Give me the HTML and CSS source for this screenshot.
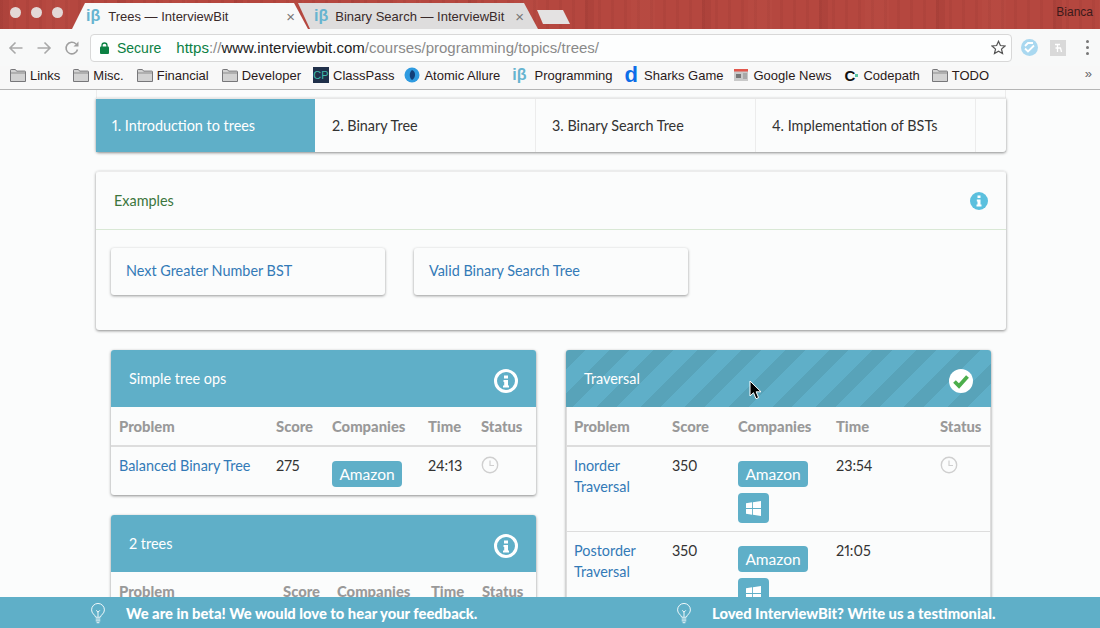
FILE: index.html
```html
<!DOCTYPE html>
<html>
<head>
    <title>Trees — InterviewBit</title>
    <link rel="stylesheet" href="styles.css">
</head>
<body>

    <svg class="icon-defs" width="0" height="0">
        <symbol id="folder" viewBox="0 0 16 13">
            <path d="M.5 12.5V1.2q0-.7.7-.7h4.2l1.2 1.6h8.2q.7 0 .7.7v9.7z" fill="#d2d2d2" stroke="#77777a"/>
            <path d="M1 4h14" stroke="#8d8d8d"/>
        </symbol>
        <symbol id="bulb" viewBox="0 0 16 24">
            <path d="M5.5 15.5C4.5 12.500 1 11.500 1 7.500a7 7 0 0 1 14 0c0 4-3.500 5-4.500 8z" fill="none" stroke="#fff"/>
            <path d="M8 15V9M6 8l2 2 2-2M5.500 17.500h5M5.500 19.500h5M6.500 21.500h3" fill="none" stroke="#fff"/>
        </symbol>
        <symbol id="clock" viewBox="0 0 18 18">
            <circle cx="9" cy="9" r="7.700" fill="none" stroke="#cfcfcf" stroke-width="1.400"/>
            <path d="M9 4.500V9.500H13" fill="none" stroke="#cfcfcf" stroke-width="1.200"/>
        </symbol>
        <symbol id="windows" viewBox="0 0 16 16">
            <path d="M0 2.300 6.500 1.400V7.500H0zM7.400 1.300 16 0V7.500H7.400zM0 8.500H6.500V14.600L0 13.700zM7.400 8.500H16V16L7.400 14.700z" fill="#fff"/>
        </symbol>
        <symbol id="info" viewBox="0 0 24 24">
            <circle cx="12" cy="12" r="10.500" fill="none" stroke="#fff" stroke-width="3"/>
            <path d="M10 6.500h4v3h-4zM9.500 11h4.500v5.500h1v2h-6v-2h1.200V13H9.500z" fill="#fff"/>
        </symbol>
    </svg>

    <header class="browser">
        <div class="tab-strip">
            <div class="lights"><i></i><i></i><i></i></div>
            <div class="tab tab-front"><span class="ib">iβ</span><span class="tab-title">Trees — InterviewBit</span><span class="tab-x">×</span></div>
            <div class="tab tab-back"><span class="ib">iβ</span><span class="tab-title">Binary Search — InterviewBit</span><span class="tab-x">×</span></div>
            <div class="tab-new"></div>
            <div class="user-name">Bianca</div>
        </div>
        <div class="toolbar">
            <div class="nav-buttons">
                <svg width="16" height="16" viewBox="0 0 16 16"><path d="M14.500 8H2M7.500 2.500 2 8l5.500 5.500" fill="none" stroke="#a9a9a9" stroke-width="1.600"/></svg>
                <svg width="16" height="16" viewBox="0 0 16 16"><path d="M1.500 8H14M8.500 2.500 14 8l-5.500 5.500" fill="none" stroke="#a9a9a9" stroke-width="1.600"/></svg>
                <svg width="16" height="16" viewBox="0 0 16 16"><path d="M13.500 9.500A5.800 5.800 0 1 1 12 4" fill="none" stroke="#a0a0a0" stroke-width="1.600"/><path d="M14.500 1.500v5h-5z" fill="#a0a0a0"/></svg>
            </div>
            <div class="omnibox">
                <svg class="lock" width="9" height="12" viewBox="0 0 9 12"><path d="M2 5V3.500a2.500 2.500 0 0 1 5 0V5" fill="none" stroke="#0b8043" stroke-width="1.300"/><rect y="4.500" width="9" height="7.500" rx="1" fill="#0b8043"/></svg>
                <span class="secure">Secure</span>
                <span class="url"><span class="url-green">https</span><span class="url-grey">://</span><span class="url-host">www.interviewbit.com</span><span class="url-grey">/courses/programming/topics/trees/</span></span>
                <svg class="star" width="15" height="15" viewBox="0 0 16 16"><path d="M8 1.400l2 4.500 4.900.5-3.700 3.300 1.100 4.800L8 12l-4.300 2.500 1.100-4.800L1.100 6.400 6 5.900z" fill="none" stroke="#555" stroke-width="1.300"/></svg>
            </div>
            <div class="extensions">
                <svg width="17" height="17" viewBox="0 0 17 17"><circle cx="8.500" cy="8.500" r="8.500" fill="#a9d8f0"/><path d="M4 9.500l3 3 6-6M4 7l3-3h5" fill="none" stroke="#fff" stroke-width="1.800"/></svg>
                <svg width="16" height="16" viewBox="0 0 16 16"><rect width="16" height="16" fill="#d9d9d9"/><path d="M5 4.500h5M7.500 4.500V12M5.500 8h5l1 4" fill="none" stroke="#fff" stroke-width="1.300"/></svg>
                <span class="ext-menu"><i></i><i></i><i></i></span>
            </div>
        </div>
        <nav class="bookmarks">
            <a><svg class="bm-folder"><use href="#folder"/></svg>Links</a>
            <a><svg class="bm-folder"><use href="#folder"/></svg>Misc.</a>
            <a><svg class="bm-folder"><use href="#folder"/></svg>Financial</a>
            <a><svg class="bm-folder"><use href="#folder"/></svg>Developer</a>
            <a class="bm-classpass"><span class="bm-cp">CP</span>ClassPass</a>
            <a class="bm-atomic"><svg width="16" height="16" viewBox="0 0 16 16"><circle cx="8" cy="8" r="7.500" fill="#2f9be0"/><path d="M8 3c4 1 4 8 0 10-3-2-3-8 0-10z" fill="#123f78"/></svg>Atomic Allure</a>
            <a class="bm-programming"><span class="ib">iβ</span>Programming</a>
            <a class="bm-sharks"><span class="bm-d">d</span>Sharks Game</a>
            <a class="bm-news"><svg width="15" height="14" viewBox="0 0 15 14"><rect y="1" width="14" height="12" fill="#c9c9c9"/><rect y="1" width="14" height="2.500" fill="#e2574c"/><rect x="2" y="6" width="5" height="4" fill="#777"/><path d="M9 6h4M9 8h4M9 10h4" stroke="#888"/></svg>Google News</a>
            <a class="bm-codepath"><span class="bm-c">C<i></i></span>Codepath</a>
            <a class="bm-todo"><svg class="bm-folder"><use href="#folder"/></svg>TODO</a>
            <span class="bm-more">»</span>
        </nav>
    </header>

    <main class="page">
        <div class="container">
            <div class="topic-card">
                <div class="topic-tabs">
                    <a class="topic-tab active">1. Introduction to trees</a>
                    <a class="topic-tab">2. Binary Tree</a>
                    <a class="topic-tab">3. Binary Search Tree</a>
                    <a class="topic-tab">4. Implementation of BSTs</a>
                    <a class="topic-tab topic-tab-end"></a>
                </div>
            </div>

            <section class="examples">
                <div class="examples-head">
                    <span>Examples</span>
                    <svg width="18" height="18" viewBox="0 0 18 18"><circle cx="9" cy="9" r="9" fill="#5bc0de"/><path d="M7.500 3.500h3V6h-3zM6.800 7.500h3.700v5h1v2h-5v-2h1v-3h-.7z" fill="#fff"/></svg>
                </div>
                <div class="examples-body">
                    <a class="example-card">Next Greater Number BST</a>
                    <a class="example-card">Valid Binary Search Tree</a>
                </div>
            </section>

            <div class="columns">
                <div class="column">
                    <section class="panel">
                        <div class="panel-head">
                            <span>Simple tree ops</span>
                            <svg class="head-icon"><use href="#info"/></svg>
                        </div>
                        <table class="problems cols-a">
                            <thead>
                                <tr><th>Problem</th><th>Score</th><th>Companies</th><th>Time</th><th>Status</th></tr>
                            </thead>
                            <tbody>
                                <tr>
                                    <td><a>Balanced Binary Tree</a></td>
                                    <td>275</td>
                                    <td><span class="pill">Amazon</span></td>
                                    <td>24:13</td>
                                    <td><svg class="clock"><use href="#clock"/></svg></td>
                                </tr>
                            </tbody>
                        </table>
                    </section>
                    <section class="panel">
                        <div class="panel-head">
                            <span>2 trees</span>
                            <svg class="head-icon"><use href="#info"/></svg>
                        </div>
                        <table class="problems cols-b">
                            <thead>
                                <tr><th>Problem</th><th>Score</th><th>Companies</th><th>Time</th><th>Status</th></tr>
                            </thead>
                        </table>
                    </section>
                </div>
                <div class="column">
                    <section class="panel panel-done">
                        <div class="panel-head panel-head-done">
                            <span>Traversal</span>
                            <svg class="head-icon" viewBox="0 0 24 24"><circle cx="12" cy="12" r="12" fill="#fff"/><path d="M5.500 12.500 10 17l8.500-9.500" fill="none" stroke="#4cae4c" stroke-width="3.800"/></svg>
                        </div>
                        <table class="problems cols-c">
                            <thead>
                                <tr><th>Problem</th><th>Score</th><th>Companies</th><th>Time</th><th>Status</th></tr>
                            </thead>
                            <tbody>
                                <tr>
                                    <td><a>Inorder Traversal</a></td>
                                    <td>350</td>
                                    <td><span class="pill">Amazon</span><span class="pill pill-icon"><svg width="15" height="15"><use href="#windows"/></svg></span></td>
                                    <td>23:54</td>
                                    <td><svg class="clock"><use href="#clock"/></svg></td>
                                </tr>
                                <tr>
                                    <td><a>Postorder Traversal</a></td>
                                    <td>350</td>
                                    <td><span class="pill">Amazon</span><span class="pill pill-icon"><svg width="15" height="15"><use href="#windows"/></svg></span></td>
                                    <td>21:05</td>
                                    <td></td>
                                </tr>
                            </tbody>
                        </table>
                    </section>
                </div>
            </div>
        </div>

        <svg class="cursor" width="13" height="20" viewBox="0 0 13 20"><path d="M1 1v15l3.500-3.300 2.500 6 2.600-1.100-2.500-5.800H12z" fill="#000" stroke="#fff"/></svg>

        <footer class="beta-bar">
            <div class="beta-item"><svg class="bulb"><use href="#bulb"/></svg>We are in beta! We would love to hear your feedback.</div>
            <div class="beta-item beta-item-right"><svg class="bulb"><use href="#bulb"/></svg>Loved InterviewBit? Write us a testimonial.</div>
        </footer>
    </main>

</body>
</html>
```

FILE: styles.css
```css
* {
    box-sizing: border-box;
}

html, body {
    height: 100%;
}

body {
    margin: 0;
    overflow: hidden;
    display: flex;
    flex-direction: column;
    font-family: 'Liberation Sans', Arial, sans-serif;
    background-color: #fbfcfc;
}

.icon-defs {
    position: absolute;
}

/* browser chrome */
.browser {
    height: 90px;
    flex: none;
    background-color: #f8f8f8;
    border-bottom: 1px solid #b5b5b5;
}

.tab-strip {
    height: 29px;
    display: flex;
    position: relative;
    background-color: #b5473f;
    background-image:
        repeating-linear-gradient(90deg, rgba(90, 20, 20, 0.08) 0 9px, transparent 9px 46px, rgba(255, 150, 130, 0.03) 46px 70px, transparent 70px 117px),
        repeating-linear-gradient(90deg, rgba(70, 10, 10, 0.05) 0 3px, transparent 3px 13px);
}

.lights {
    width: 72px;
    display: flex;
    gap: 10px;
    padding: 7px 0 0 10px;
}

.lights i {
    width: 11px;
    height: 11px;
    border-radius: 50%;
    background-color: #e3d9d7;
}

.tab {
    height: 26px;
    margin-top: 3px;
    display: flex;
    align-items: center;
    font-size: 13px;
    color: #3a2a2a;
}

.tab-front {
    width: 236px;
    padding: 0 13px 0 14px;
    background-color: #f8f9f9;
    clip-path: polygon(0 100%, 13px 0, 222px 0, 236px 100%);
    position: relative;
    z-index: 1;
}

.tab-front .tab-title {
    margin-left: 8px;
}

.tab-back {
    width: 240px;
    margin-left: -10px;
    padding: 0 14px 0 16px;
    background-color: #dedddd;
    clip-path: polygon(0 0, 226px 0, 240px 100%, 12px 100%);
}

.tab-title {
    flex: 1;
    margin-left: 7px;
    white-space: nowrap;
}

.tab-x {
    font-size: 15px;
    color: #777;
}

.ib {
    font-size: 16px;
    font-weight: bold;
    color: #67b4d0;
}

.tab-new {
    width: 33px;
    height: 14px;
    margin: 10px 0 0 -1px;
    background-color: #e4e2e2;
    clip-path: polygon(0 0, 26px 0, 33px 100%, 6px 100%);
}

.user-name {
    margin-left: auto;
    padding: 5px 7px 0 0;
    font-size: 12px;
    color: #3b1a1a;
}

.toolbar {
    height: 37px;
    display: flex;
    align-items: center;
    background-color: #f8f9f9;
}

.nav-buttons {
    width: 90px;
    display: flex;
    gap: 12px;
    padding-left: 8px;
}

.omnibox {
    width: 922px;
    height: 28px;
    display: flex;
    align-items: center;
    padding: 0 5px 0 9px;
    background-color: #fdfefe;
    border: 1px solid #d8d8d8;
    border-radius: 4px;
    font-size: 14px;
    white-space: nowrap;
}

.lock {
    margin-right: 8px;
}

.secure {
    color: #0b8043;
    margin-right: 15px;
}

.url {
    font-size: 15px;
}

.url-green {
    color: #0b8043;
}

.url-grey {
    color: #8a8a8a;
}

.url-host {
    color: #222;
}

.star {
    margin-left: auto;
}

.extensions {
    flex: 1;
    display: flex;
    align-items: center;
    padding-left: 9px;
    gap: 12px;
}

.ext-menu {
    display: flex;
    flex-direction: column;
    gap: 3px;
    padding-left: 8px;
}

.ext-menu i {
    width: 3px;
    height: 3px;
    border-radius: 50%;
    background-color: #777;
}

.bookmarks {
    height: 23px;
    display: flex;
    align-items: center;
    gap: 13px;
    padding: 0 0 5px 10px;
    font-size: 13px;
    color: #2b1a1a;
    position: relative;
}

.bookmarks a {
    display: flex;
    align-items: center;
    gap: 4px;
    white-space: nowrap;
}

.bookmarks .bm-classpass {
    margin-left: -1px;
}

.bookmarks .bm-atomic {
    margin-left: -3px;
}

.bookmarks .bm-programming {
    gap: 8px;
    margin-left: -1px;
}

.bookmarks .bm-sharks {
    gap: 6px;
    margin-left: -1px;
}

.bookmarks .bm-news {
    margin-left: -2px;
}

.bookmarks .bm-codepath {
    gap: 5px;
}

.bookmarks .bm-todo {
    margin-left: -1px;
}

.bm-folder {
    width: 16px;
    height: 13px;
}

.bm-cp {
    width: 16px;
    height: 16px;
    font-size: 11px;
    line-height: 16px;
    text-align: center;
    color: #3fb8a8;
    background-color: #20304a;
}

.bm-d {
    font-size: 22px;
    line-height: 16px;
    font-weight: bold;
    color: #0d6ee8;
}

.bm-c {
    font-size: 15px;
    font-weight: bold;
    color: #111;
    display: flex;
    align-items: center;
}

.bm-c i {
    width: 3px;
    height: 3px;
    background-color: #58c5a0;
}

.bm-more {
    position: absolute;
    right: 8px;
    top: 0;
    color: #666;
}

/* page */
.page {
    flex: 1;
    min-height: 0;
    position: relative;
    overflow: hidden;
}

.container {
    width: 910px;
    margin-left: 96px;
    font-family: Lato, 'Noto Sans', sans-serif;
    font-size: 14.4px;
    font-variant-numeric: proportional-nums;
    color: #333;
}

.topic-card {
    padding-top: 8px;
    border-left: 1px solid #ececec;
    border-right: 1px solid #ececec;
}

.topic-tabs {
    margin: 0 -1px;
    height: 54px;
    display: flex;
    background-color: #fbfcfc;
    border-top: 1px solid #e7e7e7;
    border-radius: 0 0 3px 3px;
    box-shadow: 0 1px 3px rgba(0, 0, 0, 0.45);
}

.topic-tab {
    width: 220px;
    padding-left: 16px;
    line-height: 53px;
    border-left: 1px solid #ececec;
}

.topic-tab.active {
    width: 219px;
    color: #fff;
    background-color: #5fafc8;
    border-left: none;
}

.active + .topic-tab {
    border-left-color: transparent;
}

.topic-tab-end {
    flex: 1;
}

.examples {
    height: 159px;
    margin-top: 19px;
    border-top: 1px solid #ececec;
    border-radius: 3px;
    box-shadow: 0 1px 3px rgba(0, 0, 0, 0.45);
}

.examples-head {
    height: 58px;
    display: flex;
    justify-content: space-between;
    align-items: center;
    padding: 0 18px;
    color: #3c763d;
    border-bottom: 1px solid #d9e8d5;
}

.examples-body {
    display: flex;
    gap: 29px;
    padding: 18px 15px 0;
}

.example-card {
    width: 274px;
    height: 47px;
    padding-left: 15px;
    line-height: 46px;
    color: #337ab7;
    border-radius: 3px;
    box-shadow: 0 1px 3px rgba(0, 0, 0, 0.4);
}

.columns {
    display: flex;
    gap: 30px;
    padding: 20px 15px 0;
}

.column {
    width: 425px;
    display: flex;
    flex-direction: column;
    gap: 20px;
}

.panel {
    border-radius: 3px;
    box-shadow: 0 1px 3px rgba(0, 0, 0, 0.45);
}

.panel-done {
    border-left: 1px solid #ddd;
    border-right: 1px solid #ddd;
}

.panel-head {
    height: 57px;
    display: flex;
    justify-content: space-between;
    padding: 20px 18px 0 18px;
    color: #fff;
    background-color: #5fafc8;
    border-radius: 3px 3px 0 0;
}

.panel-head-done {
    margin: 0 -1px;
    background-image: repeating-linear-gradient(135deg, #58a3b9 0 14px, #5fafc8 14px 31px);
}

.head-icon {
    width: 24px;
    height: 24px;
    margin-top: -1px;
}

.problems {
    width: 100%;
    border-collapse: collapse;
    table-layout: fixed;
}

.problems th {
    height: 39px;
    padding: 0 8px;
    text-align: left;
    font-size: 14.8px;
    font-weight: 900;
    color: #999;
    border-bottom: 2px solid #ddd;
}

.problems td {
    padding: 8px;
    vertical-align: top;
    line-height: 21px;
    border-bottom: 1px solid #ddd;
}

.problems tr:last-child td {
    border-bottom: none;
}

.problems a {
    color: #337ab7;
}

.cols-c th:first-child,
.cols-c td:first-child {
    padding-left: 7px;
}

.cols-a th:nth-child(1) { width: 157px; }
.cols-a th:nth-child(2) { width: 56px; }
.cols-a th:nth-child(3) { width: 96px; }
.cols-a th:nth-child(4) { width: 53px; }

.cols-b th:nth-child(1) { width: 164px; }
.cols-b th:nth-child(2) { width: 54px; }
.cols-b th:nth-child(3) { width: 94px; }
.cols-b th:nth-child(4) { width: 51px; }

.cols-c th:nth-child(1) { width: 97px; }
.cols-c th:nth-child(2) { width: 66px; }
.cols-c th:nth-child(3) { width: 98px; }
.cols-c th:nth-child(4) { width: 104px; }

.pill {
    display: block;
    width: 70px;
    height: 26px;
    margin: 6px 0 0;
    font-size: 15.5px;
    line-height: 26px;
    text-align: center;
    color: #fff;
    background-color: #5fafc8;
    border-radius: 4px;
}

.pill-icon {
    width: 31px;
    height: 30px;
    margin-top: 6px;
    padding-top: 8px;
    line-height: 0;
}

.clock {
    width: 18px;
    height: 18px;
    display: block;
    margin-top: 1px;
}

.cursor {
    position: absolute;
    left: 749px;
    top: 290px;
}

.beta-bar {
    position: absolute;
    left: 0;
    right: 0;
    bottom: 0;
    height: 31px;
    display: flex;
    padding: 1px 0 0 90px;
    font-family: Lato, 'Noto Sans', sans-serif;
    font-size: 14.75px;
    font-weight: 900;
    color: #fff;
    background-color: #5fafc8;
}

.beta-item {
    width: 586px;
    display: flex;
    align-items: center;
    gap: 20px;
}

.beta-item-right {
    width: auto;
}

.bulb {
    width: 16px;
    height: 22px;
    margin-top: 2px;
}
```
